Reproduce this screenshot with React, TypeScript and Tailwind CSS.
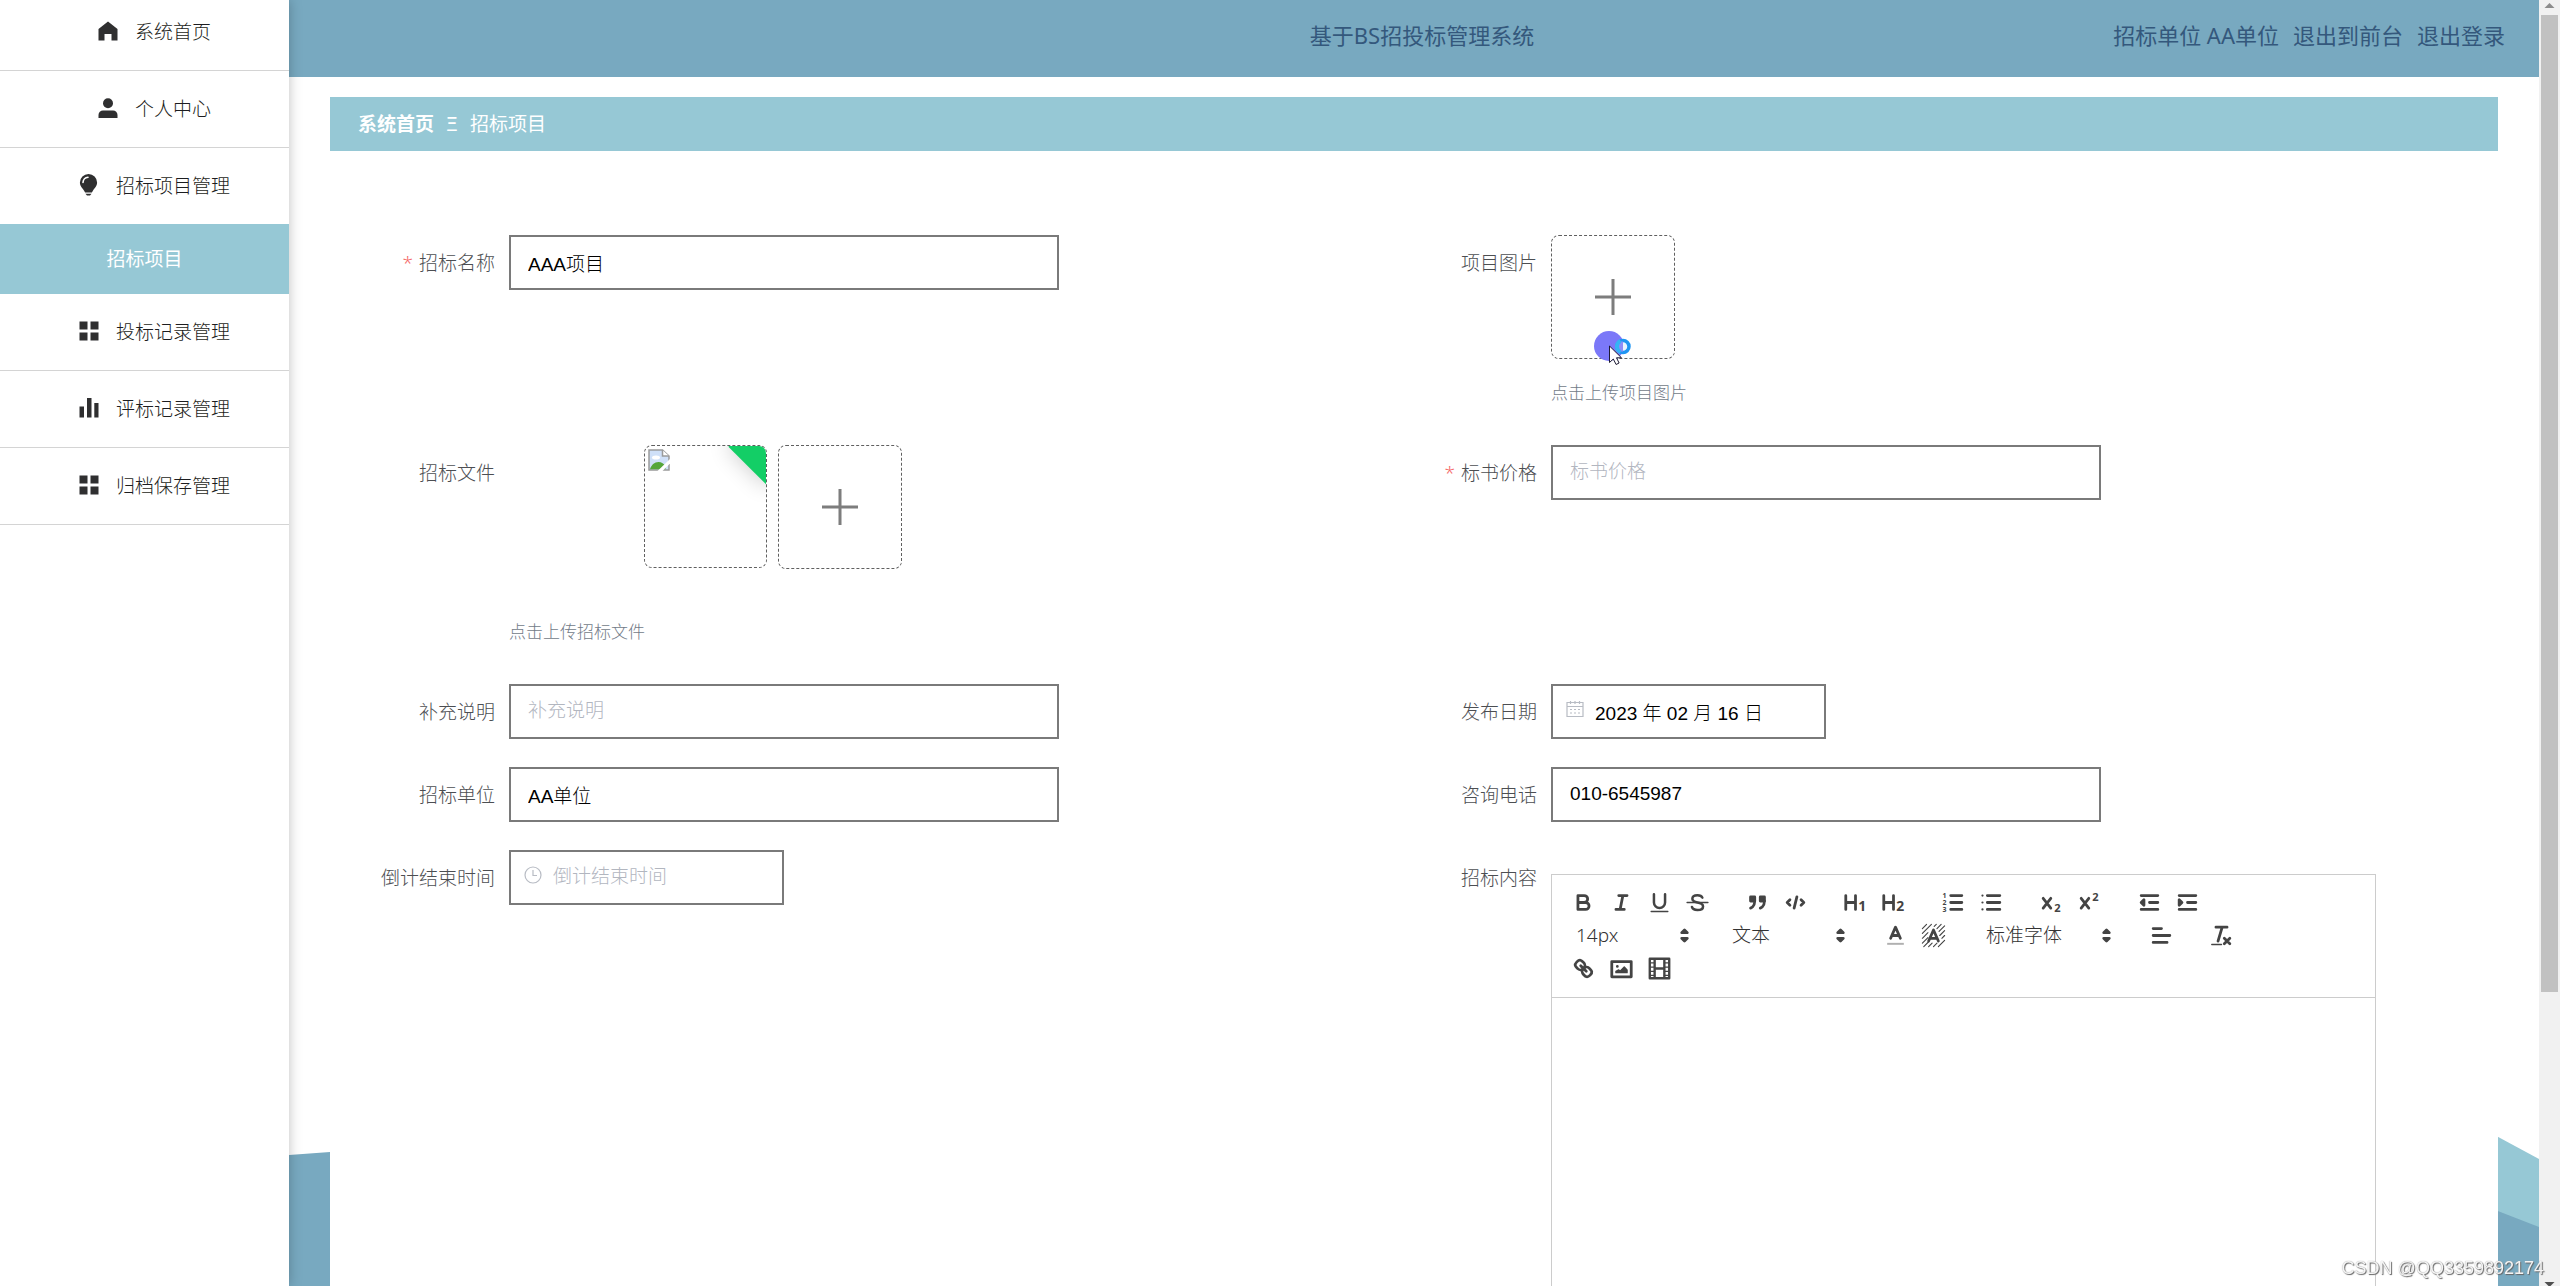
import type { ReactNode } from 'react'
import clsx from 'clsx'

const icons: Record<string, ReactNode> = {
  home: <path d="M10 0.5 19.5 8v11.5h-6v-6.5h-7v6.5h-6V8z" />,
  user: (
    <>
      <circle cx="10" cy="5.2" r="5" />
      <path d="M0.5 20v-3a4.5 4.5 0 0 1 4.5-4.5h10a4.5 4.5 0 0 1 4.5 4.5v3z" />
    </>
  ),
  bulb: (
    <>
      <path d="M9.5-1a8.6 8.6 0 0 1 8.6 8.6c0 3.6-2.6 5.6-4.2 8.2l-1 1.8H6.1l-1-1.8C3.5 13.2.9 11.2.9 7.6A8.6 8.6 0 0 1 9.5-1z" />
      <path d="M4 7.5a5.5 5.5 0 0 1 5-5.3" fill="none" stroke="#fff" strokeWidth="1.6" strokeLinecap="round" />
      <path d="M6.5 18.8h6l-1.5 1.7H8z" />
    </>
  ),
  grid: <path d="M.5.5h8v8h-8zM11.5.5h8v8h-8zM.5 11.5h8v8h-8zM11.5 11.5h8v8h-8z" />,
  bars: <path d="M.5 8.5h4.5v11H.5zM8 0h4.5v19.5H8zM15.3 5h4.2v14.5h-4.2z" />,
}

const menu = [
  { icon: 'home', text: '系统首页' },
  { icon: 'user', text: '个人中心' },
  { icon: 'bulb', text: '招标项目管理', children: ['招标项目'] },
  { icon: 'grid', text: '投标记录管理' },
  { icon: 'bars', text: '评标记录管理' },
  { icon: 'grid', text: '归档保存管理' },
]

function Sidebar() {
  return (
    <nav className="relative z-10 w-[289px] shrink-0 bg-white text-[#1c1d20] shadow-[0_0_12px_rgba(0,0,0,0.25)]">
      <ul className="-mt-1.5">
        {menu.map((item) => (
          <li key={item.text}>
            <a
              href="#"
              className={clsx(
                'flex items-center justify-center gap-[17px] pl-5',
                item.children ? 'h-[76px]' : 'h-[77px] border-b border-[#d4d4d4]',
              )}
            >
              <svg viewBox="0 0 20 20" className="mb-0.5 size-5 overflow-visible fill-[#2f2f30]">
                {icons[item.icon]}
              </svg>
              {item.text}
            </a>
            {item.children?.map((child) => (
              <a
                key={child}
                href="#"
                className="flex h-[70px] items-center justify-center bg-[#96c8d5] font-normal text-white"
              >
                {child}
              </a>
            ))}
          </li>
        ))}
      </ul>
    </nav>
  )
}

function Field({
  label,
  htmlFor,
  required,
  children,
}: {
  label: string
  htmlFor: string
  required?: boolean
  children: ReactNode
}) {
  return (
    <div className="flex items-start">
      <label
        htmlFor={htmlFor}
        className="h-[55px] w-[138px] shrink-0 pr-3.5 text-right leading-[57px] text-[#4c4e52]"
      >
        {required && <span className="mr-1.5 text-[#f56c6c]">*</span>}
        {label}
      </label>
      {children}
    </div>
  )
}

const inputClass =
  "h-[55px] border-2 border-[#7a7a7a] bg-white pb-px font-['Liberation_Sans','Noto_Sans_CJK_SC',sans-serif] text-black outline-none placeholder:text-[#b2b6bf]"

function TextField({
  id,
  label,
  value,
  placeholder,
  required,
}: {
  id: string
  label: string
  value?: string
  placeholder?: string
  required?: boolean
}) {
  return (
    <Field label={label} htmlFor={id} required={required}>
      <input
        id={id}
        type="text"
        defaultValue={value}
        placeholder={placeholder}
        className={clsx(inputClass, 'w-[550px] px-[17px]')}
      />
    </Field>
  )
}

function DateField({
  id,
  label,
  value,
  placeholder,
  children,
}: {
  id: string
  label: string
  value?: string
  placeholder?: string
  children: ReactNode
}) {
  return (
    <Field label={label} htmlFor={id}>
      <div className="relative w-[275px]">
        <svg
          viewBox="0 0 18 18"
          className="absolute top-4 left-[15px] size-[18px] fill-none stroke-[#b8bcc4] stroke-[1.2]"
        >
          {children}
        </svg>
        <input
          id={id}
          type="text"
          defaultValue={value}
          placeholder={placeholder}
          className={clsx(inputClass, 'w-full pr-4 pl-[42px]')}
        />
      </div>
    </Field>
  )
}

function UploadButton({ id, label }: { id: string; label: string }) {
  return (
    <button
      id={id}
      type="button"
      aria-label={label}
      className="flex size-[124px] items-center justify-center rounded-lg border border-dashed border-[#606060]"
    >
      <svg viewBox="0 0 36 36" className="size-9 stroke-[#7d7d7d] stroke-[3]">
        <path d="M18 0v36M0 18h36" />
      </svg>
    </button>
  )
}

function BusyCursor() {
  return (
    <svg viewBox="0 0 40 36" className="pointer-events-none absolute top-24 left-[43px] h-9 w-10">
      <circle cx="15" cy="15" r="15" fill="#7b78f8" />
      <circle cx="29" cy="15.5" r="6" fill="#eaf4ff" stroke="#1f95f2" strokeWidth="3.5" />
      <path d="M26 10.5a6 6 0 0 0 0 10h3v-10z" fill="#8f8cf9" />
      <path d="M26.5 10a6 6 0 0 0 0 11" fill="none" stroke="#35b4f5" strokeWidth="4" />
      <path d="M15.5 15v16.5l3.8-3.5 2.8 5.5 3-1.5-2.6-5.2h5z" fill="#fff" stroke="#1d1b33" strokeWidth="1" />
    </svg>
  )
}

function UploadedFile() {
  return (
    <div className="relative size-[123px] overflow-hidden rounded-lg border border-dashed border-[#606060] p-[3px]">
      <svg viewBox="0 0 22 22" className="size-[22px]" role="img" aria-label="招标文件">
        <path d="M1 1h13.5L21 7v14H1z" fill="#cfe0f8" stroke="#9a9a9a" strokeWidth="1.5" />
        <path d="M14.5 1v6H21" fill="#fff" stroke="#9a9a9a" strokeWidth="1.5" />
        <ellipse cx="8" cy="8.5" rx="4" ry="2" fill="#fff" />
        <path d="M2 20.2c1-4 4.5-7.2 8.5-7.2 3 0 5.5 2 7 4v3.2z" fill="#55a63a" />
        <path d="M9.5 22 22 10v4.5L14.5 22z" fill="#fff" />
      </svg>
      <span className="absolute -top-2 -right-[21px] h-[33px] w-[55px] rotate-45 bg-[#13ce66] shadow-[0_0_22px_1px_rgba(0,0,0,0.2)]" />
    </div>
  )
}

function Tool({ label, children }: { label: string; children: ReactNode }) {
  return (
    <button type="button" aria-label={label} className="flex h-[33px] w-[38px] items-center justify-center">
      <svg
        viewBox="0 0 18 18"
        className="size-[25px] fill-none stroke-[#444] stroke-2"
        strokeLinecap="round"
        strokeLinejoin="round"
      >
        {children}
      </svg>
    </button>
  )
}

function Digit({ x, y, size, children }: { x: number; y: number; size: number; children: string }) {
  return (
    <text x={x} y={y} fontSize={size} stroke="none" className="fill-[#444] font-bold">
      {children}
    </text>
  )
}

function Picker({ label, options, className }: { label: string; options: string[]; className: string }) {
  return (
    <div className={clsx('relative h-[33px]', className)}>
      <select aria-label={label} className="size-full appearance-none pl-3 text-[#333] outline-none">
        {options.map((o) => (
          <option key={o}>{o}</option>
        ))}
      </select>
      <svg
        viewBox="0 0 18 18"
        className="pointer-events-none absolute top-1 right-px size-[25px] fill-[#444] stroke-[#444] stroke-2"
        strokeLinejoin="round"
      >
        <path d="M7 11 9 13 11 11zM7 7 9 5 11 7z" />
      </svg>
    </div>
  )
}

function Editor() {
  return (
    <div className="mt-6 w-[825px] border border-[#ccc]">
      <div className="h-[123px] border-b border-[#ccc] px-3 py-[11px]">
        <div className="flex gap-[22px]">
          <div className="flex">
            <Tool label="加粗">
              <path d="M5,4H9.5A2.5,2.5,0,0,1,12,6.5v0A2.5,2.5,0,0,1,9.5,9H5zM5,9h5.5A2.5,2.5,0,0,1,13,11.5v0A2.5,2.5,0,0,1,10.5,14H5z" />
            </Tool>
            <Tool label="斜体">
              <path d="M7 4h6M5 14h6M8 14 10 4" />
            </Tool>
            <Tool label="下划线">
              <path d="M5,3V9a4.012,4.012,0,0,0,4,4H9a4.012,4.012,0,0,0,4-4V3" strokeWidth="1.8" />
              <path d="M3 15.5h12" strokeWidth="1" />
            </Tool>
            <Tool label="删除线">
              <path
                d="M12.5 5.5C12 4.3 10.6 3.7 9 3.7c-2 0-3.7.9-3.7 2.6C5.3 8 7 8.6 9 9s4 1 4 2.8c0 1.7-1.9 2.6-4 2.6-1.9 0-3.6-.7-4-2.2"
                strokeWidth="1.8"
              />
              <path d="M1.5 9h15" strokeWidth="1" />
            </Tool>
          </div>
          <div className="flex">
            <Tool label="引用">
              <rect x="4" y="5" width="3" height="3" className="fill-[#444]" />
              <rect x="11" y="5" width="3" height="3" className="fill-[#444]" />
              <path d="M7,8c0,4.031-3,5-3,5M14,8c0,4.031-3,5-3,5" />
            </Tool>
            <Tool label="代码块">
              <path d="M5 7 3 9 5 11M13 7 15 9 13 11M10 5 8 13" />
            </Tool>
          </div>
          <div className="flex">
            <Tool label="标题1">
              <path d="M2 4v10M9 4v10M2 9h7" />
              <Digit x={11} y={15} size={10}>1</Digit>
            </Tool>
            <Tool label="标题2">
              <path d="M2 4v10M9 4v10M2 9h7" />
              <Digit x={11} y={15} size={10}>2</Digit>
            </Tool>
          </div>
          <div className="flex">
            <Tool label="有序列表">
              <path d="M7 4h8M7 9h8M7 14h8" />
              <Digit x={1} y={6} size={5}>1</Digit>
              <Digit x={1} y={11} size={5}>2</Digit>
              <Digit x={1} y={16} size={5}>3</Digit>
            </Tool>
            <Tool label="无序列表">
              <path d="M6 4h9M6 9h9M6 14h9" />
              <path d="M2.5 4h.01M2.5 9h.01M2.5 14h.01" strokeWidth="1.6" />
            </Tool>
          </div>
          <div className="flex">
            <Tool label="下标">
              <path d="M3 6l5.5 7M8.5 6 3 13" />
              <Digit x={11} y={16} size={8}>2</Digit>
            </Tool>
            <Tool label="上标">
              <path d="M3 6l5.5 7M8.5 6 3 13" />
              <Digit x={11} y={8} size={8}>2</Digit>
            </Tool>
          </div>
          <div className="flex">
            <Tool label="减少缩进">
              <path d="M3 14h12M3 4h12M9 9h6" />
              <path d="M5 7v4L3 9z" className="fill-[#444]" />
            </Tool>
            <Tool label="增加缩进">
              <path d="M3 14h12M3 4h12M9 9h6" />
              <path d="M3 7v4L5 9z" className="fill-[#444]" />
            </Tool>
          </div>
        </div>

        <div className="flex gap-[22px]">
          <Picker label="字号" options={['14px', '10px', '12px', '16px', '18px']} className="w-[134px]" />
          <Picker label="标题" options={['文本', '标题1', '标题2']} className="w-[134px]" />
          <div className="flex">
            <Tool label="文字颜色">
              <path d="M3 15h12" strokeWidth="1.4" className="stroke-[#b0b0b0]" strokeLinecap="butt" />
              <path d="M5.5 11 9 3 12.5 11M7 9h4" />
            </Tool>
            <Tool label="背景颜色">
              <path
                d="M1 4 4 1M1 7.5 7.5 1M1 11 5 7M11 1 9.5 2.5M1 14.5 5 10.5M14.5 1 11.5 4M2 17 5.5 13.5M17 2 13 6M5.5 17 8 14.5M17 5.5 13.5 9M9 17 11.5 14.5M17 9 15 11M12.5 17 17 12.5"
                strokeWidth="0.8"
              />
              <path d="M5.5 13 9 5 12.5 13M7 11h4" />
            </Tool>
          </div>
          <Picker label="字体" options={['标准字体', '宋体', '黑体']} className="w-[146px]" />
          <Tool label="对齐">
            <path d="M3 9h12M3 14h10M3 4h6" />
          </Tool>
          <Tool label="清除格式">
            <path d="M5 3h8M6.5 13 9.5 3M11 11l4 4M15 11l-4 4" />
            <path d="M2 15.5h7" strokeWidth="1" />
          </Tool>
        </div>

        <div className="flex">
          <Tool label="链接">
            <path d="M7 7l4 4" />
            <path d="M8.9,4.577a3.476,3.476,0,0,1,.36,4.679A3.476,3.476,0,0,1,4.577,8.9C3.185,7.5,2.035,6.4,4.217,4.217S7.5,3.185,8.9,4.577Z" />
            <path d="M13.423,9.1a3.476,3.476,0,0,0-4.679-.36,3.476,3.476,0,0,0,.36,4.679c1.392,1.392,2.5,2.542,4.679.36S14.815,10.5,13.423,9.1Z" />
          </Tool>
          <Tool label="图片">
            <rect x="2" y="4" width="14" height="11" />
            <circle cx="6" cy="7.5" r="0.5" strokeWidth="1" />
            <path d="M5 12V11l2-1 1 1 3-3 2 2v2z" strokeWidth="1" className="fill-[#444]" />
          </Tool>
          <Tool label="视频">
            <path d="M2 2h14v14H2zM5.5 2v14M12.5 2v14M5.5 9h7" strokeWidth="1.7" />
            <path
              d="M2 5h3.5M2 8h3.5M2 11h3.5M2 14h3.5M12.5 5H16M12.5 8H16M12.5 11H16M12.5 14H16"
              strokeWidth="0.9"
            />
          </Tool>
        </div>
      </div>
      <textarea id="content" className="block h-[412px] w-full resize-none p-4 outline-none" />
    </div>
  )
}

function Hint({ children }: { children: string }) {
  return <p className="text-[17px] leading-[48px] text-[#727b88]">{children}</p>
}

function ProjectForm() {
  return (
    <form className="mt-[84px] grid grid-cols-2 gap-y-7 pr-[43px] pl-[41px]">
      <TextField id="name" label="招标名称" value="AAA项目" required />
      <Field label="项目图片" htmlFor="picture">
        <div>
          <div className="relative mb-2.5">
            <UploadButton id="picture" label="上传项目图片" />
            <BusyCursor />
          </div>
          <Hint>点击上传项目图片</Hint>
        </div>
      </Field>

      <Field label="招标文件" htmlFor="file">
        <div>
          <div className="mb-[39px] flex gap-[11px] pl-[135px]">
            <UploadedFile />
            <UploadButton id="file" label="上传招标文件" />
          </div>
          <Hint>点击上传招标文件</Hint>
        </div>
      </Field>
      <TextField id="price" label="标书价格" placeholder="标书价格" required />

      <TextField id="note" label="补充说明" placeholder="补充说明" />
      <DateField id="date" label="发布日期" value="2023 年 02 月 16 日">
        <path d="M1 2.5h16v14H1zM1 6.5h16M4.5 1v3M9 1v3M13.5 1v3" />
        <path d="M4 9.5h10M4 13h10" strokeDasharray="2 2" />
      </DateField>

      <TextField id="company" label="招标单位" value="AA单位" />
      <TextField id="phone" label="咨询电话" value="010-6545987" />

      <DateField id="deadline" label="倒计结束时间" placeholder="倒计结束时间">
        <circle cx="9" cy="9" r="8" />
        <path d="M9 4v5.5h4" />
      </DateField>
      <Field label="招标内容" htmlFor="content">
        <Editor />
      </Field>
    </form>
  )
}

function Scrollbar() {
  return (
    <div className="flex w-[21px] shrink-0 flex-col items-center bg-[#f1f1f1]" aria-hidden="true">
      <svg viewBox="0 0 21 15" className="h-[15px] w-full">
        <path d="M5.5 8 10.5 3 15.5 8z" fill="#8c8c8c" />
      </svg>
      <div className="h-[76%] w-[17px] bg-[#c1c1c1]" />
      <svg viewBox="0 0 21 5" className="mt-auto h-[5px] w-full">
        <path d="M5.5 1h10L10.5 6z" fill="#505050" />
      </svg>
    </div>
  )
}

export default function App() {
  return (
    <div className="flex h-screen overflow-hidden bg-white font-['Noto_Sans','Noto_Sans_CJK_SC',sans-serif] text-[19px] font-light">
      <Sidebar />
      <div className="relative min-w-0 flex-1 overflow-hidden">
        <svg viewBox="0 0 2250 1286" preserveAspectRatio="none" className="absolute inset-0 size-full">
          <path d="M0 1155 41 1152 700 1110V1286H0z" fill="#78a9c0" />
          <path d="M1900 970 2250 1159V1286H1900z" fill="#96c8d5" />
          <path d="M1900 1091 2250 1227V1286H1900z" fill="#78a9c0" />
        </svg>

        <header className="relative grid h-[77px] grid-cols-3 items-center bg-[#78a9c0] pb-1.5 text-[22px] font-normal text-[#34587c]">
          <h1 className="col-start-2 pl-4 text-center">基于BS招投标管理系统</h1>
          <div className="flex justify-end gap-3.5 pr-[34px]">
            <span>招标单位 AA单位</span>
            <a href="#">退出到前台</a>
            <a href="#">退出登录</a>
          </div>
        </header>

        <main className="relative mx-[41px] min-h-full bg-white pt-5">
          <div className="flex h-[54px] items-center bg-[#96c8d5] pl-7 font-normal text-white">
            <a href="#" className="font-bold">
              系统首页
            </a>
            <span className="mx-3">Ξ</span>
            <span>招标项目</span>
          </div>
          <ProjectForm />
        </main>
      </div>
      <Scrollbar />
      <div className="pointer-events-none fixed right-4 bottom-1 z-20 font-['Liberation_Sans',sans-serif] text-lg text-[#f4f4f4] [text-shadow:1px_1px_1px_#666,0_0_1px_#999]">
        CSDN @QQ3359892174
      </div>
    </div>
  )
}
